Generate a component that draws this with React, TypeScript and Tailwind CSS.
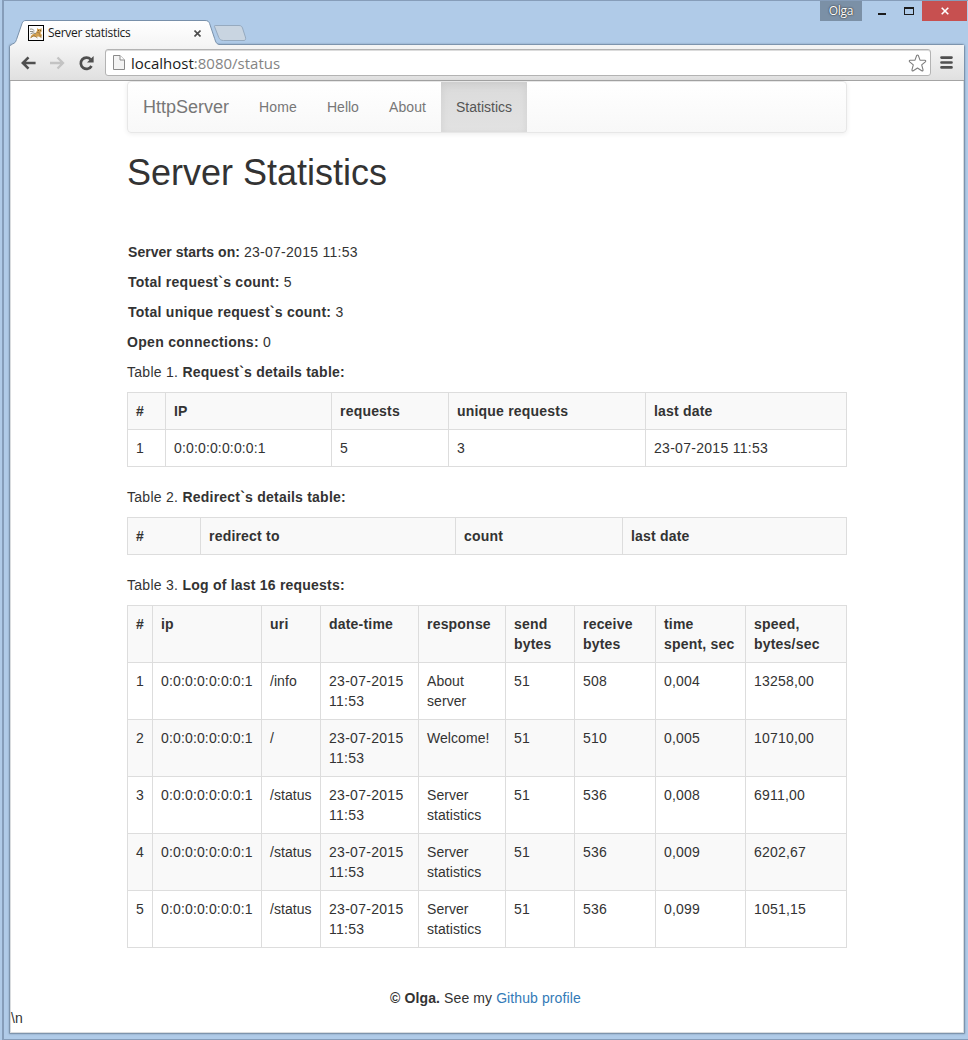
import React from "react";

const arial = "font-['Liberation_Sans',Arial,sans-serif]";

function Tab() {
  return (
    <svg width="210" height="26" viewBox="0 0 210 26" className="shrink-0">
      <defs>
        <linearGradient id="tabFill" x1="0" y1="0" x2="0" y2="1">
          <stop offset="0" stopColor="#ffffff" />
          <stop offset="1" stopColor="#f5f5f5" />
        </linearGradient>
      </defs>
      <path
        d="M0.5 25.5 C0.7 24.6 2.5 24 4 23.3 C5.3 22.5 5.8 21.5 6.5 19.5 L12 3.5 C12.8 1.3 13.8 0.5 16 0.5 H195 C197.8 0.5 198.8 1.5 199.6 3.5 L204.6 18.5 C205.8 22.3 206.6 24.5 209.5 24.5 V25.5 Z"
        fill="url(#tabFill)"
      />
      <path
        d="M0.5 26 C0.5 24.6 2.5 24 4 23.3 C5.3 22.5 5.8 21.5 6.5 19.5 L12 3.5 C12.8 1.3 13.8 0.5 16 0.5 H195 C197.8 0.5 198.8 1.5 199.6 3.5 L204.6 18.5 C205.8 22.3 206.6 24.5 210 24.5"
        fill="none"
        stroke="#7890aa"
      />
    </svg>
  );
}

function NewTab() {
  return (
    <svg width="34" height="18" viewBox="0 0 34 18" className="mt-[4px] -ml-[7px] shrink-0">
      <path
        d="M1.6 2.8 C1.2 1.6 1.6 1.5 3 1.5 H26 C28 1.5 28.8 2.3 29.5 4 L32.4 13 C33 14.8 32.5 16.5 31 16.5 H10.5 C8.2 16.5 6.6 15.5 5.8 13.5 Z"
        fill="#c9d5e1"
        stroke="#96aabf"
      />
    </svg>
  );
}

function Favicon() {
  return (
    <svg width="16" height="16" viewBox="0 0 16 16" className="shrink-0">
      <path d="M2 13.5 L3.2 10.5 L5 9 L8 7.5 L9 6.3 L9 3 L10.3 4 H12.2 L13.5 3 L13.6 6.5 L12.3 8 L14 10 L13 12.8 L10.5 11.5 L8 12 L5 11.5 Z" fill="#d3a04f" />
      <path d="M2 4.2 C4 3.6 5 4.5 6.5 6 M2 6.5 H5.5 M2.5 8.8 L5 7.8 L8 8.8" stroke="#8e8c80" strokeWidth="1" fill="none" />
      <path d="M8.5 7 L12 8.3 M3 12.5 L6 10.5 L9.5 13 M11.5 9.5 L13.3 12.5" stroke="#93713c" strokeWidth="0.8" fill="none" />
      <path d="M10 5.5 H10.8 M12 5.5 H12.8" stroke="#4b3516" strokeWidth="0.8" />
      <rect x="0.5" y="0.5" width="15" height="15" fill="none" stroke="#000" />
    </svg>
  );
}

function TitleBar() {
  return (
    <div className="relative z-10 flex h-[44px] items-start pr-px">
      <div className="flex flex-1 items-start pt-[20px] pl-px">
        <Tab />
        <NewTab />
      </div>
      <div className="absolute top-[25px] left-[19px] flex h-4 w-[180px] items-center">
        <Favicon />
        <span className="ml-1 w-[146px] text-[12px] leading-4 tracking-[-0.29px] whitespace-nowrap text-[#1a1a1a] font-['Open_Sans','Noto_Sans',sans-serif]">
          Server statistics
        </span>
        <svg width="7" height="7" viewBox="0 0 7 7" className="shrink-0">
          <path d="M0.5 0.5 L6.5 6.5 M6.5 0.5 L0.5 6.5" stroke="#4c4c4c" strokeWidth="1.6" />
        </svg>
      </div>
      <div className="flex h-[21px] pt-px">
        <div className="flex h-5 w-[42px] items-center justify-center bg-[#7b90a6] text-[12px] tracking-[-0.3px] text-white [text-shadow:0_0_2px_#333,0_0_1px_#333] font-['Open_Sans','Noto_Sans',sans-serif]">
          Olga
        </div>
        <svg width="60" height="20" viewBox="0 0 60 20">
          <rect x="16" y="12" width="8" height="2" fill="#1c1c1c" />
          <path d="M42 6 H52 V14 H42 Z M43 8 V13 H51 V8 Z" fill="#1c1c1c" fillRule="evenodd" />
        </svg>
        <div className="flex h-5 w-[45px] items-center justify-center bg-[#c75050]">
          <svg width="8" height="8" viewBox="0 0 8 8">
            <path d="M0.7 0.7 L7.3 7.3 M7.3 0.7 L0.7 7.3" stroke="#fff" strokeWidth="1.6" />
          </svg>
        </div>
      </div>
    </div>
  );
}

function Toolbar() {
  return (
    <div className="flex h-[36px] shrink-0 items-center border-b border-[#a4a4a4] bg-linear-to-b from-[#f5f5f5] to-[#e0e0e0] pl-[11px]">
      <svg width="76" height="16" viewBox="0 0 76 16" className="shrink-0">
        <path d="M14.6 8 H2.5 M7.5 2.3 L1.8 8 L7.5 13.7" fill="none" stroke="#4f4f4f" strokeWidth="2.6" />
        <path d="M29 8 H41.5 M36.5 2.5 L42 8 L36.5 13.5" fill="none" stroke="#c3c3c3" strokeWidth="2.3" />
        <path d="M69.7 4.4 A5.7 5.7 0 1 0 70.5 11" fill="none" stroke="#4f4f4f" strokeWidth="2.7" />
        <path d="M72.6 1 V7.6 H66 Z" fill="#4f4f4f" />
      </svg>
      <div className="ml-[8px] flex h-[27px] w-[826px] items-center rounded-[3px] border border-[#b3b3b3] bg-white pl-[7px] shadow-[inset_0_1px_0_#dcdcdc]">
        <svg width="12" height="15" viewBox="0 0 12 15" className="shrink-0">
          <path d="M0.5 0.5 H7 L11.5 5 V14.5 H0.5 Z" fill="#f3f3f3" stroke="#8a8a8a" />
          <path d="M7 0.5 V5 H11.5" fill="#fff" stroke="#8a8a8a" />
        </svg>
        <span className="ml-[6px] text-[15px] leading-6 whitespace-nowrap text-[#848484] font-['Open_Sans','Noto_Sans',sans-serif]">
          <span className="text-[#1a1a1a]">localhost</span>:8080/status
        </span>
        <svg width="19" height="18" viewBox="0 0 19 18" className="mr-[3px] ml-auto">
          <path
            d="M8.6 1.6 Q9.5 0.4 10.4 1.6 L12 6.1 L16.8 6.3 Q18.4 6.6 17.3 7.8 L13.7 10.9 L15 15.7 Q15.2 17.4 13.7 16.7 L9.5 14 L5.3 16.7 Q3.8 17.4 4 15.7 L5.3 10.9 L1.7 7.8 Q0.6 6.6 2.2 6.3 L7 6.1 Z"
            fill="#fff"
            stroke="#7d7d7d"
            strokeWidth="1.1"
            strokeLinejoin="round"
          />
        </svg>
      </div>
      <svg width="13" height="13" viewBox="0 0 13 13" className="ml-[9px] shrink-0">
        <path d="M1.5 1.6 H11.5 M1.5 6.5 H11.5 M1.5 11.4 H11.5" stroke="#4f4f4f" strokeWidth="2.7" strokeLinecap="round" />
      </svg>
    </div>
  );
}

function Navbar() {
  return (
    <nav className="flex h-[52px] items-stretch rounded-[4px] border border-[#e7e7e7] bg-linear-to-b from-white to-[#f8f8f8] leading-5 text-[#777] shadow-[inset_0_1px_0_rgba(255,255,255,0.15),0_1px_5px_rgba(0,0,0,0.075)]">
      <a className="w-[116px] py-[15px] pl-[15px] text-[18px]">HttpServer</a>
      <a className="w-[68px] py-[15px] pl-[15px] tracking-[0.15px]">Home</a>
      <a className="w-[62px] py-[15px] pl-[15px]">Hello</a>
      <a className="w-[67px] py-[15px] pl-[15px] tracking-[0.1px]">About</a>
      <a className="w-[86px] bg-linear-to-b from-[#dbdbdb] to-[#e2e2e2] py-[15px] pl-[15px] text-[#555] shadow-[inset_0_3px_9px_rgba(0,0,0,0.075)]">
        Statistics
      </a>
    </nav>
  );
}

const B = ({ children }: { children: React.ReactNode }) => (
  <b className="font-bold tracking-[0.26px]">{children}</b>
);

function Caption({ label, title }: { label: string; title: string }) {
  return (
    <p className="mb-[10px]">
      <span className="tracking-[0.28px]">{label} </span>
      <b className="font-bold tracking-[0.22px]">{title}</b>
    </p>
  );
}

function cellTracking(text: string) {
  if (text.startsWith("23-")) return "tracking-[0.29px]";
  if (text.startsWith("0:")) return "tracking-[0.15px]";
  return /\d/.test(text) ? "tracking-[0.2px]" : "tracking-[0.06px]";
}

function DataTable({ cols, head, rows }: { cols: string[]; head: string[]; rows: string[][] }) {
  return (
    <table className="mb-5 w-[720px] table-fixed border-separate border-spacing-0 border-t border-l border-[#ddd]">
      <colgroup>
        {cols.map((c, i) => (
          <col key={i} className={c} />
        ))}
      </colgroup>
      <thead>
        <tr className="bg-[#f9f9f9]">
          {head.map((h) => (
            <th key={h} className="border-r border-b border-[#ddd] p-2 text-left align-top font-bold tracking-[0.2px] whitespace-pre">
              {h}
            </th>
          ))}
        </tr>
      </thead>
      <tbody>
        {rows.map((r, i) => (
          <tr key={i} className={i % 2 ? "bg-[#f9f9f9]" : "bg-white"}>
            {r.map((c, j) => (
              <td key={j} className={`border-r border-b border-[#ddd] p-2 align-top whitespace-pre ${cellTracking(c)}`}>
                {c}
              </td>
            ))}
          </tr>
        ))}
      </tbody>
    </table>
  );
}

const ip = "0:0:0:0:0:0:0:1";
const when = "23-07-2015\n11:53";

const log = [
  ["1", ip, "/info", when, "About\nserver", "51", "508", "0,004", "13258,00"],
  ["2", ip, "/", when, "Welcome!", "51", "510", "0,005", "10710,00"],
  ["3", ip, "/status", when, "Server\nstatistics", "51", "536", "0,008", "6911,00"],
  ["4", ip, "/status", when, "Server\nstatistics", "51", "536", "0,009", "6202,67"],
  ["5", ip, "/status", when, "Server\nstatistics", "51", "536", "0,099", "1051,15"],
];

function Page() {
  return (
    <main className={`flex-1 border-x border-b border-[#d9dcdf] bg-white text-[14px] leading-5 text-[#333] ${arial}`}>
      <div className="ml-[116px] w-[720px]">
        <Navbar />
        <h1 className="mt-5 mb-[49px] text-[36px] leading-[40px]">Server Statistics</h1>
        <div className="flex flex-col gap-[10px] pb-[10px]">
          <p className="pl-px">
            <b className="font-bold tracking-[0.04px]">Server starts on: </b>
            <span className="tracking-[0.28px]">23-07-2015 11:53</span>
          </p>
          <p className="pl-px"><B>Total request`s count: </B>5</p>
          <p className="pl-px"><B>Total unique request`s count: </B>3</p>
          <p><b className="font-bold tracking-[0.3px]">Open connections: </b>0</p>
        </div>
        <Caption label="Table 1." title="Request`s details table:" />
        <DataTable
          cols={["w-[38px]", "w-[166px]", "w-[117px]", "w-[197px]", "w-[201px]"]}
          head={["#", "IP", "requests", "unique requests", "last date"]}
          rows={[["1", ip, "5", "3", "23-07-2015 11:53"]]}
        />
        <Caption label="Table 2." title="Redirect`s details table:" />
        <DataTable
          cols={["w-[73px]", "w-[255px]", "w-[167px]", "w-[224px]"]}
          head={["#", "redirect to", "count", "last date"]}
          rows={[]}
        />
        <Caption label="Table 3." title="Log of last 16 requests:" />
        <DataTable
          cols={["w-[25px]", "w-[109px]", "w-[59px]", "w-[98px]", "w-[87px]", "w-[69px]", "w-[81px]", "w-[90px]", "w-[101px]"]}
          head={["#", "ip", "uri", "date-time", "response", "send\nbytes", "receive\nbytes", "time\nspent, sec", "speed,\nbytes/sec"]}
          rows={log}
        />
      </div>
      <footer className="pt-5 pl-[379px] tracking-[0.1px]">
        <b className="font-bold tracking-[0.12px]">© Olga. </b>See my <a className="text-[#337ab7]">Github profile</a>
      </footer>
      <div>\n</div>
    </main>
  );
}

export default function App() {
  return (
    <div className="flex h-[1040px] w-[968px] bg-[#b0cbe8]">
      <div className="ml-[2px] flex flex-1 flex-col border-y border-l-2 border-[#869db9]">
        <div className="-mt-px flex h-[1039px] flex-col border-t border-[#869db9] pl-[5px]">
          <div className="-mt-px h-[44px]">
            <TitleBar />
          </div>
          <div className="flex h-[990px] w-[956px] flex-col rounded-t-[3px] border border-[#7d94ad] shadow-[0_0_2px_#7d94ad]">
            <Toolbar />
            <Page />
          </div>
        </div>
      </div>
    </div>
  );
}
